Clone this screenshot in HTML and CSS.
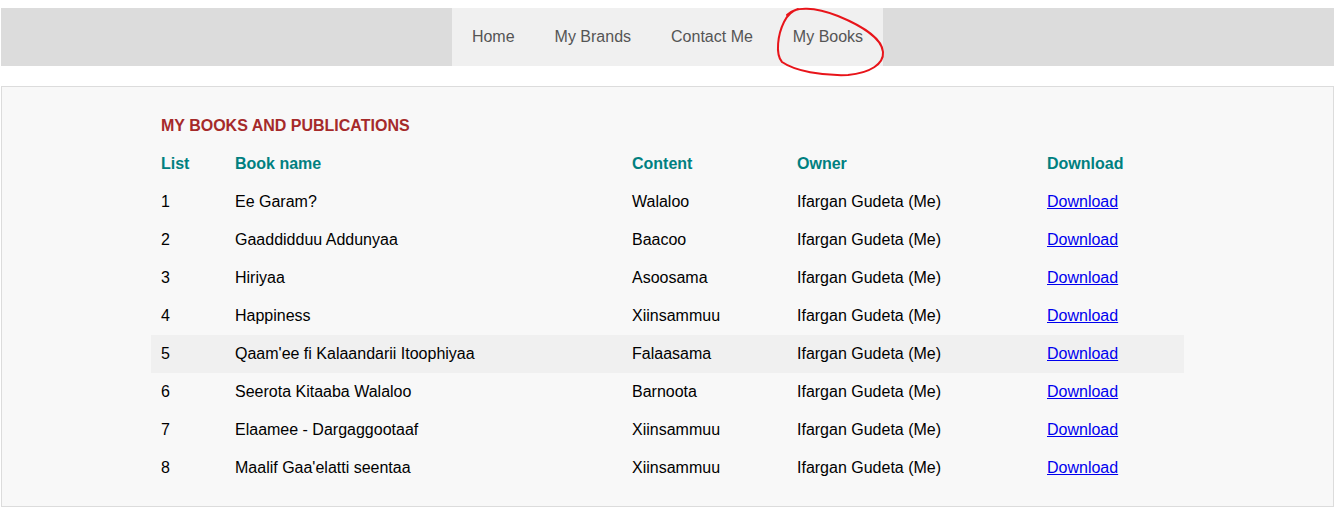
FILE: index.html
```html
<!DOCTYPE html>
<html>
<head>
<meta charset="utf-8">
<title>My Books</title>
<link rel="stylesheet" href="styles.css">
</head>
<body>
<nav class="topnav">
  <ul class="menu">
    <li><a href="#">Home</a></li>
    <li><a href="#">My Brands</a></li>
    <li><a href="#">Contact Me</a></li>
    <li><a href="#">My Books</a></li>
  </ul>
</nav>
<svg class="scribble" width="1336" height="90" viewBox="0 0 1336 90">
  <path d="M787 15 C 795 6, 815 7, 838 16 C 860 25, 882 38, 883 52 C 884 64, 870 73, 848 75 C 822 76, 795 71, 782 62 C 775 54, 778 34, 784 22 C 787 16, 791 11, 798 9" fill="none" stroke="#e8141a" stroke-width="2" stroke-linecap="round"/>
</svg>
<main class="panel">
  <h3 class="title">MY BOOKS AND PUBLICATIONS</h3>
  <table class="books">
    <thead>
      <tr><th class="c-list">List</th><th class="c-name">Book name</th><th class="c-content">Content</th><th class="c-owner">Owner</th><th class="c-dl">Download</th></tr>
    </thead>
    <tbody>
      <tr><td>1</td><td>Ee Garam?</td><td>Walaloo</td><td>Ifargan Gudeta (Me)</td><td><a href="#">Download</a></td></tr>
      <tr><td>2</td><td>Gaaddidduu Addunyaa</td><td>Baacoo</td><td>Ifargan Gudeta (Me)</td><td><a href="#">Download</a></td></tr>
      <tr><td>3</td><td>Hiriyaa</td><td>Asoosama</td><td>Ifargan Gudeta (Me)</td><td><a href="#">Download</a></td></tr>
      <tr><td>4</td><td>Happiness</td><td>Xiinsammuu</td><td>Ifargan Gudeta (Me)</td><td><a href="#">Download</a></td></tr>
      <tr class="hl"><td>5</td><td>Qaam'ee fi Kalaandarii Itoophiyaa</td><td>Falaasama</td><td>Ifargan Gudeta (Me)</td><td><a href="#">Download</a></td></tr>
      <tr><td>6</td><td>Seerota Kitaaba Walaloo</td><td>Barnoota</td><td>Ifargan Gudeta (Me)</td><td><a href="#">Download</a></td></tr>
      <tr><td>7</td><td>Elaamee - Dargaggootaaf</td><td>Xiinsammuu</td><td>Ifargan Gudeta (Me)</td><td><a href="#">Download</a></td></tr>
      <tr><td>8</td><td>Maalif Gaa'elatti seentaa</td><td>Xiinsammuu</td><td>Ifargan Gudeta (Me)</td><td><a href="#">Download</a></td></tr>
    </tbody>
  </table>
</main>
</body>
</html>
```
FILE: styles.css
```css
* { box-sizing: border-box; }
html, body { background: #ffffff; }
body {
  margin: 0;
  padding: 8px 2px 0 1px;
  font-family: "Liberation Sans", Arial, sans-serif;
  font-size: 16px;
  color: #000;
  position: relative;
}
.topnav {
  background: #dcdcdc;
  height: 58px;
  display: flex;
  justify-content: center;
}
.menu {
  list-style: none;
  margin: 0;
  padding: 0;
  display: flex;
  background: #f0f0f0;
}
.menu li a {
  display: block;
  padding: 0 20px;
  line-height: 58px;
  color: #555;
  text-decoration: none;
}
.scribble {
  position: absolute;
  left: 0;
  top: 0;
  pointer-events: none;
}
.panel {
  margin-top: 20px;
  background: #f8f8f8;
  border: 1px solid #dcdcdc;
  padding: 30px 0 19px;
}
.title {
  width: 1033px;
  margin: 0 auto 10px;
  padding-left: 10px;
  font-size: 16px;
  line-height: 18px;
  font-weight: bold;
  color: #a52a2a;
}
.books {
  width: 1033px;
  margin: 0 auto;
  border-collapse: collapse;
  table-layout: fixed;
}
.books th, .books td {
  height: 38px;
  padding: 0 10px;
  text-align: left;
  vertical-align: middle;
  white-space: nowrap;
}
.books th {
  color: #008080;
  font-weight: bold;
}
.c-list { width: 74px; }
.c-name { width: 397px; }
.c-content { width: 165px; }
.c-owner { width: 250px; }
.c-dl { width: 147px; }
.books tr.hl td { background: #f0f0f0; }
.books a { color: #0000ee; text-decoration: underline; }
```
